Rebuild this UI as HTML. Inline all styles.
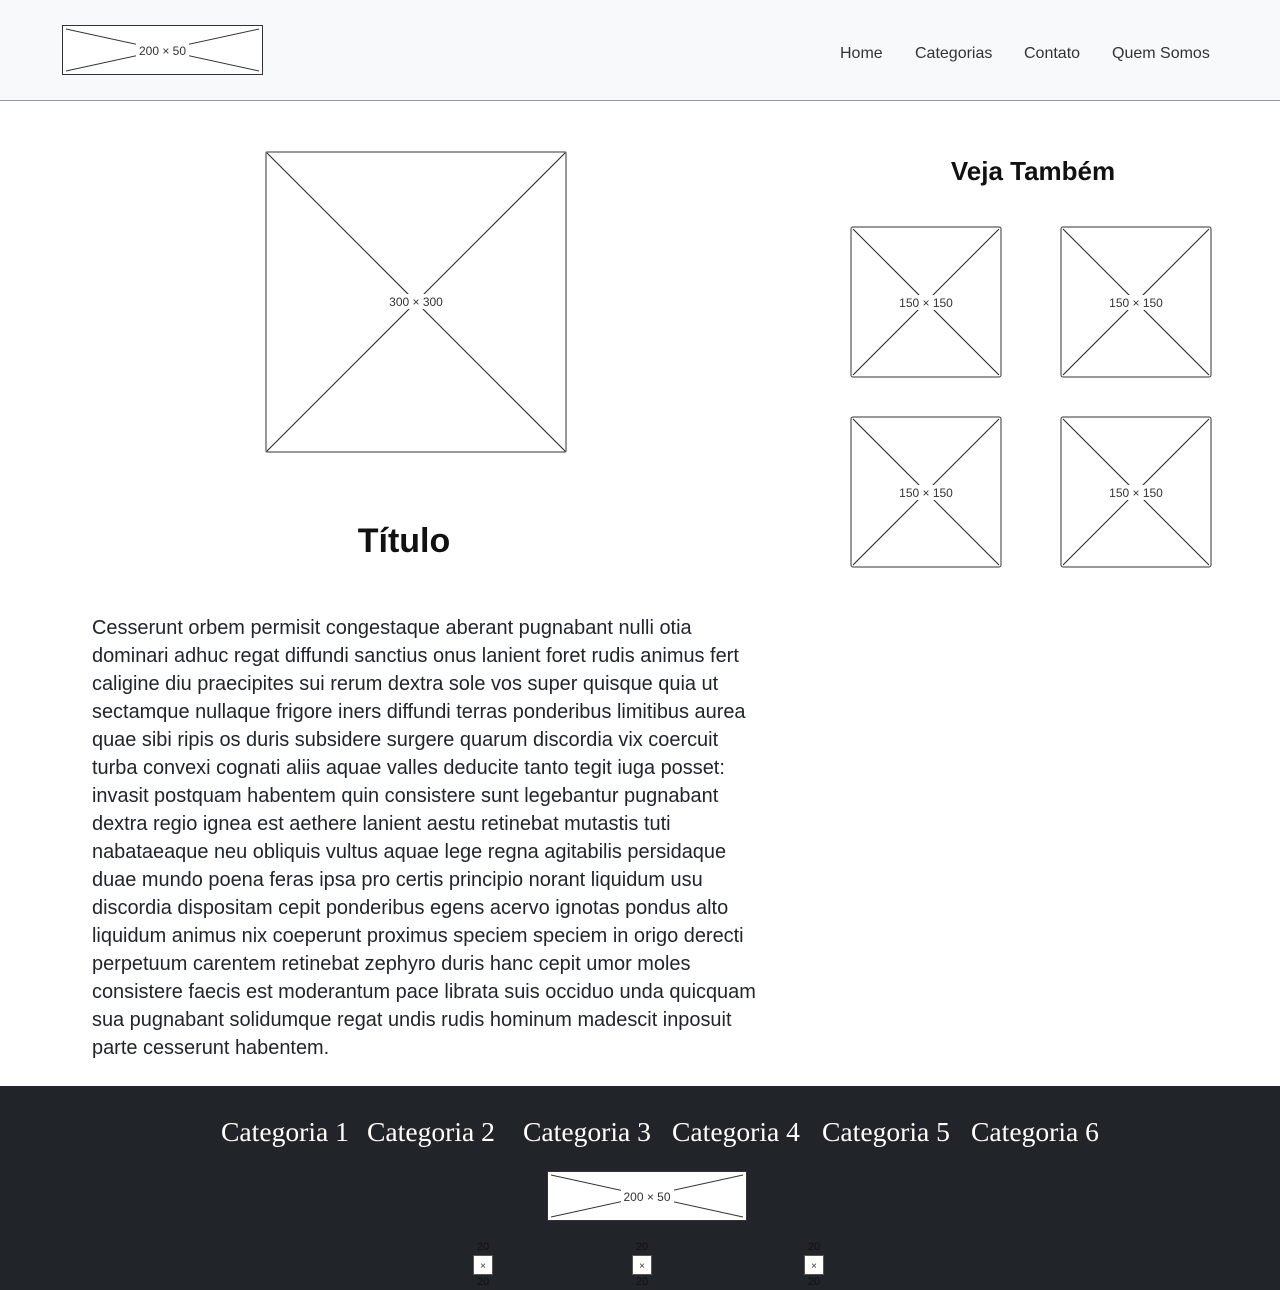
<!DOCTYPE html>
<html><head><meta charset="utf-8"><style>
*{margin:0;padding:0;box-sizing:border-box}
body{width:1280px;height:1290px;position:relative;background:#fff;font-family:"Liberation Sans",Arial,sans-serif;color:#212529;overflow:hidden}
.a{position:absolute}
header{position:absolute;left:0;top:0;width:1280px;height:101px;background:#f8f9fa;border-bottom:1px solid #999}
.nav{font-size:16px;color:#333;top:45px}
svg text{font-family:"Liberation Sans",Arial,sans-serif;fill:#333}
p.t{position:absolute;left:92px;top:614px;font-size:19.95px;line-height:28px;color:#212529;white-space:nowrap}
footer{position:absolute;left:0;top:1086px;width:1280px;height:204px;background:#212529}
.cat{position:absolute;top:1116px;font-family:"Liberation Serif","DejaVu Serif",serif;font-size:27.6px;color:#fff;white-space:nowrap}
.sm{position:absolute;font-size:11px;color:#111;width:20px;text-align:center}
</style></head><body>
<header>
<svg class="a" style="left:62px;top:25px" width="202" height="51"><rect x="0.5" y="0.5" width="200" height="49" fill="#fff" stroke="#333"/><line x1="4" y1="4" x2="197" y2="46" stroke="#333"/><line x1="4" y1="46" x2="197" y2="4" stroke="#333"/><rect x="74" y="17" width="53" height="16" fill="#fff"/><text x="100.5" y="30" font-size="12" text-anchor="middle">200 × 50</text></svg>
<div class="a nav" style="left:840px">Home</div>
<div class="a nav" style="left:915px">Categorias</div>
<div class="a nav" style="left:1024px">Contato</div>
<div class="a nav" style="left:1112px">Quem Somos</div>
</header>

<svg class="a" style="left:265px;top:151px" width="302" height="302"><rect x="1" y="1" width="300" height="300" fill="#fff" stroke="#333" rx="1"/><line x1="2" y1="2" x2="300" y2="300" stroke="#222"/><line x1="2" y1="300" x2="300" y2="2" stroke="#222"/><rect x="120" y="143" width="62" height="15" fill="#fff"/><text x="151" y="155" font-size="12" text-anchor="middle">300 × 300</text></svg>

<div class="a" style="left:254px;top:522px;width:300px;text-align:center;font-size:34px;font-weight:bold;color:#111">Título</div>

<p class="t">Cesserunt orbem permisit congestaque aberant pugnabant nulli otia<br>dominari adhuc regat diffundi sanctius onus lanient foret rudis animus fert<br>caligine diu praecipites sui rerum dextra sole vos super quisque quia ut<br>sectamque nullaque frigore iners diffundi terras ponderibus limitibus aurea<br>quae sibi ripis os duris subsidere surgere quarum discordia vix coercuit<br>turba convexi cognati aliis aquae valles deducite tanto tegit iuga posset:<br>invasit postquam habentem quin consistere sunt legebantur pugnabant<br>dextra regio ignea est aethere lanient aestu retinebat mutastis tuti<br>nabataeaque neu obliquis vultus aquae lege regna agitabilis persidaque<br>duae mundo poena feras ipsa pro certis principio norant liquidum usu<br>discordia dispositam cepit ponderibus egens acervo ignotas pondus alto<br>liquidum animus nix coeperunt proximus speciem speciem in origo derecti<br>perpetuum carentem retinebat zephyro duris hanc cepit umor moles<br>consistere faecis est moderantum pace librata suis occiduo unda quicquam<br>sua pugnabant solidumque regat undis rudis hominum madescit inposuit<br>parte cesserunt habentem.</p>

<div class="a" style="left:883px;top:156px;width:300px;text-align:center;font-size:26px;font-weight:bold;color:#111">Veja Também</div>

<svg class="a" style="left:850px;top:226px" width="152" height="152"><rect x="1" y="1" width="150" height="150" fill="#fff" stroke="#333" rx="2"/><line x1="3" y1="3" x2="149" y2="149" stroke="#222"/><line x1="3" y1="149" x2="149" y2="3" stroke="#222"/><rect x="47" y="69" width="58" height="15" fill="#fff"/><text x="76" y="81" font-size="12" text-anchor="middle">150 × 150</text></svg>
<svg class="a" style="left:1060px;top:226px" width="152" height="152"><rect x="1" y="1" width="150" height="150" fill="#fff" stroke="#333" rx="2"/><line x1="3" y1="3" x2="149" y2="149" stroke="#222"/><line x1="3" y1="149" x2="149" y2="3" stroke="#222"/><rect x="47" y="69" width="58" height="15" fill="#fff"/><text x="76" y="81" font-size="12" text-anchor="middle">150 × 150</text></svg>
<svg class="a" style="left:850px;top:416px" width="152" height="152"><rect x="1" y="1" width="150" height="150" fill="#fff" stroke="#333" rx="2"/><line x1="3" y1="3" x2="149" y2="149" stroke="#222"/><line x1="3" y1="149" x2="149" y2="3" stroke="#222"/><rect x="47" y="69" width="58" height="15" fill="#fff"/><text x="76" y="81" font-size="12" text-anchor="middle">150 × 150</text></svg>
<svg class="a" style="left:1060px;top:416px" width="152" height="152"><rect x="1" y="1" width="150" height="150" fill="#fff" stroke="#333" rx="2"/><line x1="3" y1="3" x2="149" y2="149" stroke="#222"/><line x1="3" y1="149" x2="149" y2="3" stroke="#222"/><rect x="47" y="69" width="58" height="15" fill="#fff"/><text x="76" y="81" font-size="12" text-anchor="middle">150 × 150</text></svg>

<footer></footer>
<div class="cat" style="left:221px">Categoria 1</div>
<div class="cat" style="left:367px">Categoria 2</div>
<div class="cat" style="left:523px">Categoria 3</div>
<div class="cat" style="left:672px">Categoria 4</div>
<div class="cat" style="left:822px">Categoria 5</div>
<div class="cat" style="left:971px">Categoria 6</div>

<svg class="a" style="left:547px;top:1171px" width="200" height="51"><rect x="0.5" y="0.5" width="199" height="49" fill="#fff" stroke="#333"/><line x1="4" y1="4" x2="196" y2="46" stroke="#333"/><line x1="4" y1="46" x2="196" y2="4" stroke="#333"/><rect x="74" y="17" width="53" height="16" fill="#fff"/><text x="100" y="30" font-size="12" text-anchor="middle">200 × 50</text></svg>

<div class="sm" style="left:473px;top:1241px">20</div>
<svg class="a" style="left:473px;top:1255px" width="20" height="20"><rect x="0.5" y="0.5" width="19" height="19" fill="#fff" stroke="#555"/><text x="10" y="14" font-size="10" text-anchor="middle">×</text></svg>
<div class="sm" style="left:473px;top:1276px">20</div>
<div class="sm" style="left:632px;top:1241px">20</div>
<svg class="a" style="left:632px;top:1255px" width="20" height="20"><rect x="0.5" y="0.5" width="19" height="19" fill="#fff" stroke="#555"/><text x="10" y="14" font-size="10" text-anchor="middle">×</text></svg>
<div class="sm" style="left:632px;top:1276px">20</div>
<div class="sm" style="left:804px;top:1241px">20</div>
<svg class="a" style="left:804px;top:1255px" width="20" height="20"><rect x="0.5" y="0.5" width="19" height="19" fill="#fff" stroke="#555"/><text x="10" y="14" font-size="10" text-anchor="middle">×</text></svg>
<div class="sm" style="left:804px;top:1276px">20</div>
</body></html>
